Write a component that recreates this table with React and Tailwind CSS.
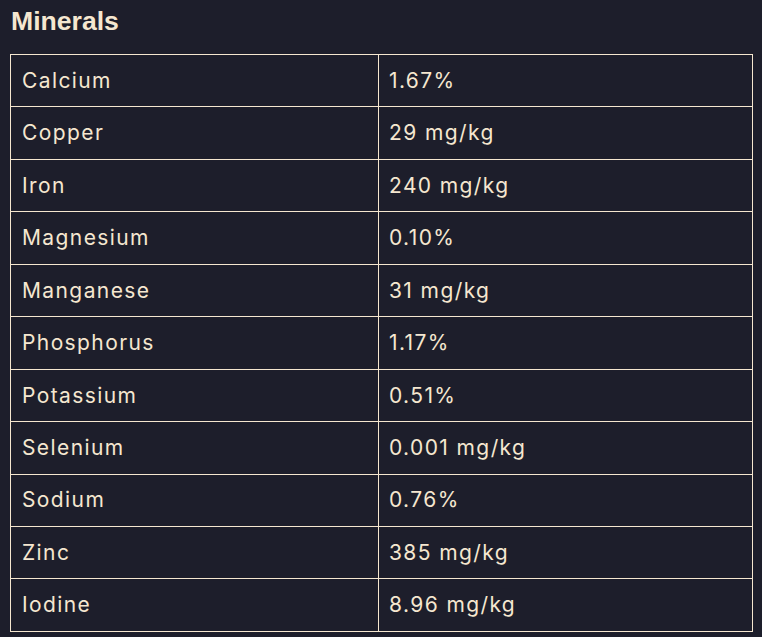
import React from "react";

const minerals = [
  ["Calcium", "1.67%"],
  ["Copper", "29 mg/kg"],
  ["Iron", "240 mg/kg"],
  ["Magnesium", "0.10%"],
  ["Manganese", "31 mg/kg"],
  ["Phosphorus", "1.17%"],
  ["Potassium", "0.51%"],
  ["Selenium", "0.001 mg/kg"],
  ["Sodium", "0.76%"],
  ["Zinc", "385 mg/kg"],
  ["Iodine", "8.96 mg/kg"],
];

const App = () => {
  return (
    <div className="min-h-screen w-full bg-[#1d1e2b] text-[#f5e7d0] pt-[5px] pl-[10px] pr-[9px]">
      <h2 className="text-[26.6px] font-bold leading-[32px] pl-px font-['Liberation_Sans',Arial,sans-serif]">
        Minerals
      </h2>
      <table className="mt-[17px] w-full border-collapse font-['Inter',sans-serif] text-[21px] tracking-[1.4px]">
        <tbody>
          {minerals.map(([name, value]) => (
            <tr key={name} className="h-[52.45px]">
              <td className="w-[368px] border border-[#f5e7d0] pl-[11px] py-0 align-middle">
                {name}
              </td>
              <td className="border border-[#f5e7d0] pl-[10px] py-0 align-middle">
                {value}
              </td>
            </tr>
          ))}
        </tbody>
      </table>
    </div>
  );
};

export default App;
